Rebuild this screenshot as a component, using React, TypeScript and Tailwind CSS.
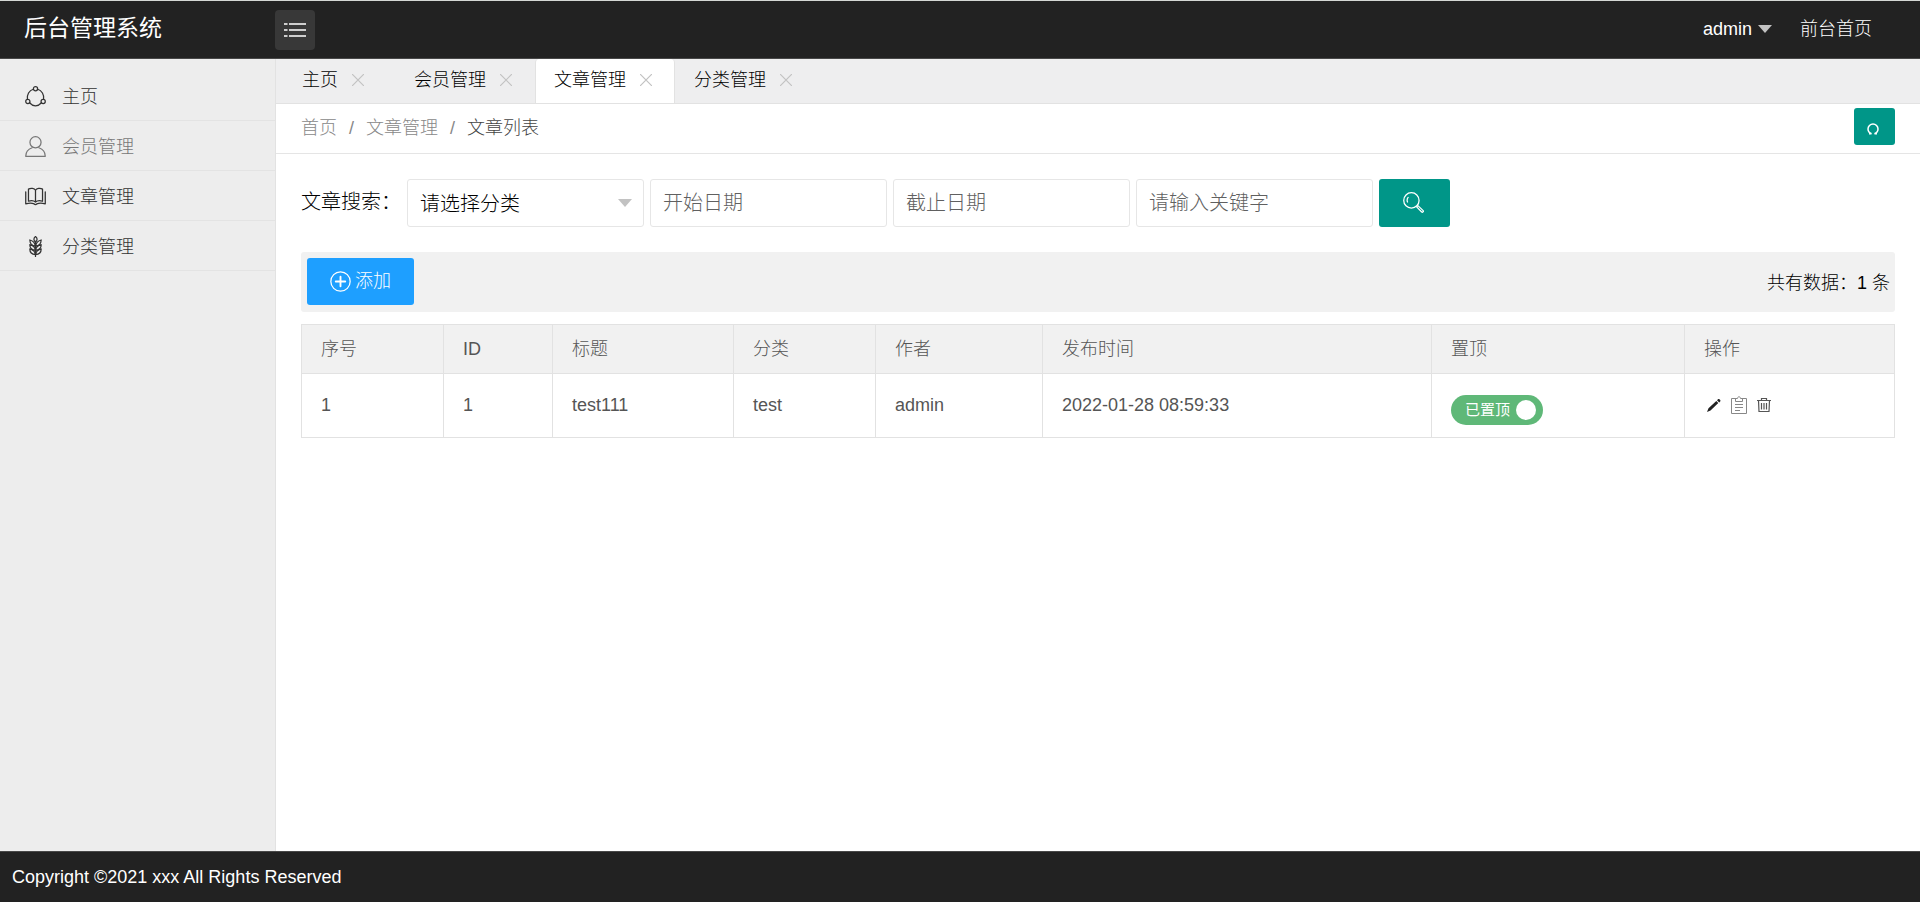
import type { ReactNode } from "react";

const menu = [
  { label: "主页", icon: <ShareIcon />, active: false },
  { label: "会员管理", icon: <UserIcon />, active: true },
  { label: "文章管理", icon: <BookIcon />, active: false },
  { label: "分类管理", icon: <WheatIcon />, active: false },
];

const tabs = ["主页", "会员管理", "文章管理", "分类管理"];

const columns = [
  { title: "序号", width: "w-[142px]" },
  { title: "ID", width: "w-[109px]" },
  { title: "标题", width: "w-[181px]" },
  { title: "分类", width: "w-[142px]" },
  { title: "作者", width: "w-[167px]" },
  { title: "发布时间", width: "" },
  { title: "置顶", width: "w-[253px]" },
  { title: "操作", width: "w-[210px]" },
];

const articles = [
  { no: 1, id: 1, title: "test111", category: "test", author: "admin", time: "2022-01-28 08:59:33" },
];

function Svg({ children, className = "size-[21px]" }: { children: ReactNode; className?: string }) {
  return (
    <svg
      viewBox="0 0 20 20"
      className={`shrink-0 ${className}`}
      fill="none"
      stroke="currentColor"
      strokeWidth="1.2"
      strokeLinecap="round"
      strokeLinejoin="round"
      aria-hidden="true"
    >
      {children}
    </svg>
  );
}

function ShareIcon() {
  return (
    <Svg>
      <circle cx="10" cy="2.6" r="2" />
      <circle cx="2.7" cy="14.8" r="2" />
      <circle cx="17.3" cy="14.8" r="2" />
      <path d="M7.9 3.1C4 4.2 1.6 8.4 2.3 12.7M12.1 3.1c3.9 1.1 6.3 5.3 5.6 9.6M4.6 16.2c3 3.5 7.8 3.5 10.8 0" />
    </Svg>
  );
}

function UserIcon() {
  return (
    <Svg>
      <circle cx="10" cy="6" r="5.3" />
      <path d="M6.8 11.2C3 12.5.7 15.5.7 19.3h18.6c0-3.8-2.3-6.8-6.1-8.1" />
    </Svg>
  );
}

function BookIcon() {
  return (
    <Svg>
      <path d="M10 4C9 2.200 5.500 1.600 3.300 3v11.500c2.500-1 5.200-.6 6.700.8 1.500-1.400 4.200-1.800 6.700-.8V3C14.500 1.600 11 2.200 10 4zM10 4v11.300" />
      <path d="M.7 5.500v11.500c3-.9 6-.9 8 0 .7.9 1.900.9 2.600 0 2-.9 5-.9 8 0V5.500" />
    </Svg>
  );
}

function WheatIcon() {
  return (
    <Svg>
      <path d="M10 5v14.500M10 .5c-2 1.500-2 3.500 0 5.500 2-2 2-4 0-5.500z" />
      <path d="M10 9.800C7.500 9.500 4.600 7.500 4.600 3.800 7.500 4.500 9.500 6.500 10 9.800zM10 9.800c2.500-.3 5.400-2.300 5.400-6C12.500 4.500 10.500 6.500 10 9.800z" />
      <path d="M10 13.800c-2.500-.3-5.400-2-5.400-5.500 2.900.7 4.900 2.500 5.400 5.500zM10 13.800c2.500-.3 5.400-2 5.400-5.500-2.900.7-4.900 2.500-5.400 5.500z" />
      <path d="M10 17.800c-2.500-.3-5.400-2-5.400-5.500 2.900.7 4.900 2.500 5.400 5.500zM10 17.800c2.500-.3 5.400-2 5.400-5.500-2.900.7-4.900 2.500-5.400 5.500z" />
    </Svg>
  );
}

function Header() {
  return (
    <header className="flex h-[59px] items-center border-t border-b border-t-[#d5d8d5] border-b-[#484848] bg-[#222] text-white">
      <div className="w-[275px] pb-1 pl-6 text-[23px] font-normal">后台管理系统</div>
      <button aria-label="菜单" className="flex size-10 items-center justify-center rounded bg-[#383838]">
        <svg viewBox="0 0 22 14" className="h-[14px] w-[22px]" fill="none" stroke="#fff" strokeWidth="1.4" aria-hidden="true">
          <path d="M0 1h3.500M5 1h17M0 7h3.500M5 7h17M0 13h3.500M5 13h17" />
        </svg>
      </button>
      <nav className="ml-auto flex items-center pr-12 pb-0.5">
        <button className="mr-7 flex items-center gap-1.5">
          admin
          <span className="border-x-7 border-t-8 border-x-transparent border-t-[#c2c2c2]" />
        </button>
        <a href="#">前台首页</a>
      </nav>
    </header>
  );
}

function Sidebar() {
  return (
    <aside className="w-[276px] shrink-0 border-r border-[#e2e2e2] bg-[#ededed] pt-3">
      <ul>
        {menu.map((item) => (
          <li key={item.label} className="border-b border-[#e3e3e3]">
            <a href="#" className={`flex h-[49px] items-center gap-4 pt-0.5 pl-[25px] ${item.active ? "text-[#777]" : "text-[#333]"}`}>
              {item.icon}
              {item.label}
            </a>
          </li>
        ))}
      </ul>
    </aside>
  );
}

function TabBar() {
  return (
    <div className="flex h-[45px] items-end border-b border-[#e2e2e2] bg-[#eeeeef] pl-[7px]">
      {tabs.map((tab, i) => (
        <div
          key={tab}
          className={`flex h-11 items-center gap-3.5 border-x pb-0.5 pl-[18px] ${i === 0 ? "w-28" : "w-[140px]"} ${
            i === 2 ? "rounded-t-sm border-[#e2e2e2] bg-white" : "border-transparent"
          }`}
        >
          <button className="text-black">{tab}</button>
          <button aria-label={`关闭${tab}`} className="text-[#c2c2c2]">
            <svg viewBox="0 0 12 12" className="size-3" stroke="currentColor" strokeWidth="1.2" aria-hidden="true">
              <path d="M0 0l12 12M12 0L0 12" />
            </svg>
          </button>
        </div>
      ))}
    </div>
  );
}

function Breadcrumb() {
  return (
    <div className="flex h-[50px] items-start justify-between border-b border-[#e5e5e5] px-[25px]">
      <nav className="flex h-12 items-center gap-3 text-[#888]">
        <a href="#">首页</a>
        <span>/</span>
        <a href="#">文章管理</a>
        <span>/</span>
        <span className="text-[#444]">文章列表</span>
      </nav>
      <button aria-label="刷新" className="mt-1 flex h-[37px] w-[41px] items-center justify-center rounded-[3px] bg-[#009688] pt-1 pr-1 text-white">
        <svg viewBox="0 0 12 12" className="size-3" fill="none" stroke="currentColor" strokeWidth="1.5" aria-hidden="true">
          <path d="M2 10.800h2.500C1.500 9.500 1 7.500 1 6a5 5 0 0 1 10 0c0 1.500-.5 3.500-3.500 4.800H10" />
        </svg>
      </button>
    </div>
  );
}

function SearchForm() {
  const field = "h-12 w-[237px] rounded-[3px] border border-[#e6e6e6] bg-white px-3 text-xl outline-none placeholder:text-[#606060]";
  return (
    <form className="flex items-center gap-1.5">
      <label htmlFor="category" className="w-[100px] pb-0.5 text-xl">
        文章搜索：
      </label>
      <div className="relative">
        <select id="category" className={`${field} appearance-none pt-0.5 text-black`}>
          <option>请选择分类</option>
        </select>
        <span className="pointer-events-none absolute top-5 right-3 border-x-7 border-t-8 border-x-transparent border-t-[#c2c2c2]" />
      </div>
      <input aria-label="开始日期" placeholder="开始日期" className={field} />
      <input aria-label="截止日期" placeholder="截止日期" className={field} />
      <input aria-label="关键字" placeholder="请输入关键字" className={field} />
      <button type="button" aria-label="搜索" className="flex h-12 w-[71px] items-center justify-center rounded-[3px] bg-[#009688] pr-0.5 pb-0.5 text-white">
        <Svg>
          <circle cx="8" cy="8" r="7.3" />
          <path d="M4.300 9.500a4.200 4.200 0 0 1 .6-4.300M13 14.200l1.200-1.200 5 4.700c.6.9-.5 2-1.400 1.400z" />
        </Svg>
      </button>
    </form>
  );
}

function Toolbar() {
  return (
    <div className="mt-[25px] flex h-[60px] items-center justify-between rounded-[3px] bg-[#f1f1f1] pr-[5px] pb-0.5 pl-1.5">
      <button className="flex h-[47px] w-[107px] items-center justify-center gap-1 rounded-[3px] bg-[#1e9fff] text-white">
        <Svg>
          <circle cx="10" cy="10" r="9.2" />
          <path d="M10 5.500v9M5.500 10h9" strokeWidth="1.8" />
        </Svg>
        添加
      </button>
      <span className="pt-1">共有数据：1 条</span>
    </div>
  );
}

function ArticleTable() {
  const cell = "border border-[#e2e2e2] px-[19px] text-left font-light";
  const bodyCell = `${cell} pb-0.5`;
  return (
    <table className="mt-3 w-full table-fixed border-collapse text-[#555]">
      <thead>
        <tr className="h-[49px] bg-[#f1f1f1]">
          {columns.map((col) => (
            <th key={col.title} className={`${cell} ${col.width}`}>
              {col.title}
            </th>
          ))}
        </tr>
      </thead>
      <tbody>
        {articles.map((row) => (
          <tr key={row.id} className="h-16">
            <td className={bodyCell}>{row.no}</td>
            <td className={bodyCell}>{row.id}</td>
            <td className={bodyCell}>{row.title}</td>
            <td className={bodyCell}>{row.category}</td>
            <td className={bodyCell}>{row.author}</td>
            <td className={bodyCell}>{row.time}</td>
            <td className={cell}>
              <button role="switch" aria-checked="true" className="mt-2 flex h-[30px] w-[92px] items-center justify-between rounded-full bg-[#5fb878] pr-[7px] pl-3.5 text-[15px] font-normal text-white">
                已置顶
                <span className="size-5 rounded-full bg-white" />
              </button>
            </td>
            <td className={bodyCell}>
              <div className="flex items-center gap-[9px] pl-0.5 text-[#555]">
                <button aria-label="编辑">
                  <svg viewBox="0 0 16 16" className="size-4" fill="#222" aria-hidden="true">
                    <path d="M1 15l1.500-3.800L10.300 4l2 2-7.800 7.500zM11 3.200l1-1c.4-.4 1-.4 1.400 0l.8.8c.4.4.4 1 0 1.400l-1 1z" />
                  </svg>
                </button>
                <button aria-label="详情">
                  <svg viewBox="0 0 16 18" className="h-[18px] w-4" fill="none" stroke="#888" aria-hidden="true">
                    <path d="M5 2.500H.5v15h15v-15H11M4.500 5.500v-3H6.500C6.500.2 9.500.2 9.500 2.500h2v3zM4 8.500h8M4 11.500h8M4 14.500h5" />
                  </svg>
                </button>
                <button aria-label="删除">
                  <svg viewBox="0 0 16 16" className="size-4" fill="none" stroke="currentColor" strokeWidth="1.2" aria-hidden="true">
                    <path d="M1 3.500h14M5.500 3V1.500h5V3M2.500 3.500l.5 11h10l.5-11M5.500 6v6.500M8 6v6.500M10.500 6v6.500" />
                  </svg>
                </button>
              </div>
            </td>
          </tr>
        ))}
      </tbody>
    </table>
  );
}

export default function App() {
  return (
    <div className="flex min-h-screen flex-col bg-white font-['Liberation_Sans','Noto_Sans_CJK_SC',sans-serif] text-[18px] leading-6 font-light text-black">
      <Header />
      <div className="flex flex-1">
        <Sidebar />
        <div className="min-w-0 flex-1">
          <TabBar />
          <Breadcrumb />
          <main className="px-[25px] pt-[25px]">
            <SearchForm />
            <Toolbar />
            <ArticleTable />
          </main>
        </div>
      </div>
      <footer className="flex h-[51px] items-center border-t border-[#484848] bg-[#222] px-3 text-white">
        Copyright ©2021 xxx All Rights Reserved
      </footer>
    </div>
  );
}
